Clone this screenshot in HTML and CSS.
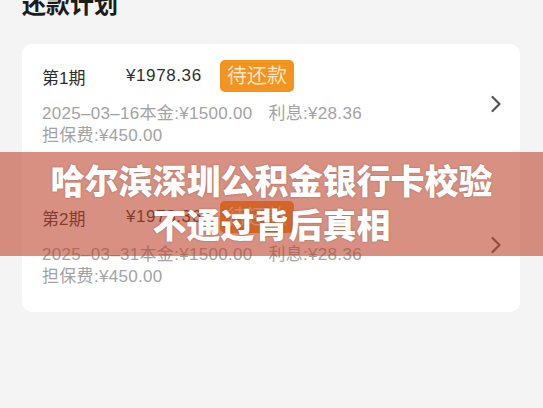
FILE: index.html
```html
<!DOCTYPE html>
<html lang="zh-CN">

<head>
  <meta charset="utf-8">
  <title>还款计划</title>
  <link rel="stylesheet" href="styles.css">
</head>

<body>
  <div class="page">
    <div class="page-title">还款计划</div>

    <div class="plan-card">
      <div class="plan-row">
        <div class="plan-info">
          <div class="plan-head">
            <span class="term">第1期</span>
            <span class="amount">¥1978.36</span>
            <span class="badge">待还款</span>
          </div>
          <div class="plan-line">2025–03–16本金:¥1500.00<span class="gap">利息:¥28.36</span></div>
          <div class="plan-line">担保费:¥450.00</div>
        </div>
        <svg class="arrow" width="12" height="18" viewBox="0 0 12 18">
          <path d="M2.5 2 L9.5 9 L2.5 16" fill="none" stroke="#555" stroke-width="2.2" stroke-linecap="round" stroke-linejoin="round"/>
        </svg>
      </div>

      <div class="plan-row">
        <div class="plan-info">
          <div class="plan-head">
            <span class="term">第2期</span>
            <span class="amount">¥1978.36</span>
            <span class="badge">待还款</span>
          </div>
          <div class="plan-line">2025–03–31本金:¥1500.00<span class="gap">利息:¥28.36</span></div>
          <div class="plan-line">担保费:¥450.00</div>
        </div>
        <svg class="arrow" width="12" height="18" viewBox="0 0 12 18">
          <path d="M2.5 2 L9.5 9 L2.5 16" fill="none" stroke="#555" stroke-width="2.2" stroke-linecap="round" stroke-linejoin="round"/>
        </svg>
      </div>
    </div>
  </div>

  <div class="banner">
    哈尔滨深圳公积金银行卡校验<br>不通过背后真相
  </div>
</body>

</html>
```

FILE: styles.css
```css
body {
  margin: 0;
  background-color: #f4f4f4;
  font-family: "Liberation Sans", "Noto Sans CJK SC", sans-serif;
  height: 408px;
  overflow: hidden;
}

.page {
  padding: 0 23px 0 22px;
}

.page-title {
  font-size: 24px;
  line-height: 30px;
  font-weight: bold;
  color: #1c1c1c;
  margin-top: -10px;
}

.plan-card {
  background-color: #fff;
  border-radius: 10px;
  margin-top: 24px;
  display: flex;
  flex-direction: column;
  gap: 14px;
}

.plan-row {
  display: flex;
  align-items: center;
  padding: 16px 18px 24px 20px;
}

.plan-info {
  flex: 1;
}

.plan-head {
  display: flex;
  align-items: center;
  height: 32px;
  font-size: 17px;
  color: #2e2e2e;
}

.term {
  width: 84px;
}

.amount {
  width: 94px;
  letter-spacing: 0.6px;
}

.badge {
  background-color: #f2941f;
  color: #fde6c6;
  font-size: 20px;
  line-height: 32px;
  height: 32px;
  padding: 0 7px;
  border-radius: 5px;
}

.plan-line {
  font-size: 17px;
  line-height: 22px;
  color: #a3a3a3;
  letter-spacing: 0.3px;
}

.plan-head + .plan-line {
  margin-top: 11px;
}

.gap {
  margin-left: 16px;
}

.arrow {
  display: block;
}

.banner {
  position: absolute;
  top: 152px;
  left: 0;
  right: 0;
  padding: 8px 0;
  background-color: rgba(188, 70, 45, 0.6);
  color: #fff;
  text-align: center;
  font-size: 34px;
  line-height: 44px;
  font-weight: 900;
  text-shadow: 0 0 2px rgba(60, 20, 10, 0.35);
}
```
